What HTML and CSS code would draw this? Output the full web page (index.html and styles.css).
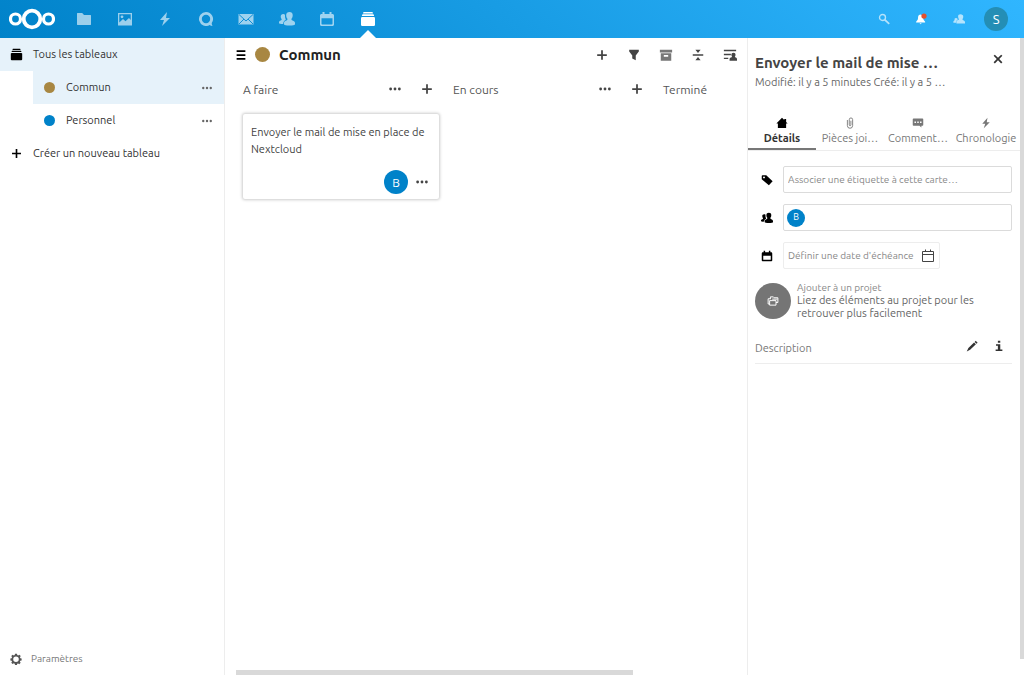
FILE: index.html
```html
<!DOCTYPE html>
<html lang="fr">
<head>
<meta charset="utf-8">
<meta name="viewport" content="width=device-width, initial-scale=1">
<title>Commun - Deck - Nextcloud</title>
<link rel="stylesheet" href="styles.css">
</head>
<body>
<svg class="defs" aria-hidden="true">
  <symbol id="dots" viewBox="0 0 16 16"><circle cx="3" cy="8" r="1.600"/><circle cx="8" cy="8" r="1.600"/><circle cx="13" cy="8" r="1.600"/></symbol>
  <symbol id="plus" viewBox="0 0 16 16"><path d="M7 2.500h2V7h4.500v2H9v4.500H7V9H2.500V7H7z"/></symbol>
  <symbol id="bolt" viewBox="0 0 16 16"><path d="M10 1 3 9h4l-2 6 8-8H9z"/></symbol>
  <symbol id="people" viewBox="0 0 16 16"><path d="M10.500 1C8.500 1 7.200 2.200 7.200 3.900c0 1.800.4 3 1.200 3.800.2.900 0 1.400-1.100 1.800C6 10 5 10.500 5 12v1.600c0 .5 2.300 1 5.500 1s5.500-.5 5.500-1V12c0-1.500-1-2-2.400-2.500-1.100-.4-1.300-.9-1.100-1.800.8-.8 1.200-2 1.200-3.800C13.700 2.200 12.500 1 10.500 1z"/><path d="M4.200 3C2.700 3 1.700 4 1.700 5.400c0 1.200.3 2.100.9 2.700.1.800 0 1.100-.9 1.400C.6 9.900 0 10.300 0 11.300v1c0 .3 1.600.7 4.200.7.100-2.300.8-3.400 2.600-4.100-.3-.3-.1-.8-.1-.9-.5-.6-.8-1.800-.7-4.300-.5-.5-1-.7-1.800-.7z"/></symbol>
  <symbol id="deck" viewBox="0 0 16 16"><path d="M3.500 1h9l.5 1.500H3zM2.500 3.300h11l.7 1.700H1.800z"/><rect x="1" y="6" width="14" height="9" rx="1.200"/></symbol>
  <symbol id="calendar" viewBox="0 0 16 16"><path fill-rule="evenodd" d="M3.500 1h2v2h5V1h2v2h1c.8 0 1.500.7 1.500 1.500v9c0 .8-.7 1.500-1.500 1.500h-11C1.700 15 1 14.300 1 13.500v-9C1 3.700 1.700 3 2.500 3h1zM2.500 7.300v5.400c0 .5.300.8.800.8h9.400c.5 0 .8-.3.800-.8V7.300z"/></symbol>
</svg>

<header class="topbar">
  <a class="logo" href="#" aria-label="Nextcloud">
    <svg viewBox="0 0 46 22" fill="none" stroke="#fff"><circle cx="23" cy="11" r="8.300" stroke-width="3.800"/><circle cx="6.500" cy="11" r="5" stroke-width="3.200"/><circle cx="39.500" cy="11" r="5" stroke-width="3.200"/></svg>
  </a>
  <nav class="apps" aria-label="Applications">
    <a href="#" aria-label="Fichiers"><svg viewBox="0 0 16 16"><path d="M1.500 2h4.700L8 4h6.500c.3 0 .5.200.5.500v9c0 .3-.2.500-.5.500h-13c-.3 0-.5-.2-.5-.5v-11c0-.3.200-.5.500-.5z"/></svg></a>
    <a href="#" aria-label="Photos"><svg viewBox="0 0 16 16"><path fill-rule="evenodd" d="M1 2h14v12.500H1zM2.300 3.300v8.200L6 8l2.500 2.300L12 7l1.700 2V3.300z"/><circle cx="5" cy="5.800" r="1.400"/></svg></a>
    <a href="#" aria-label="Activité"><svg><use href="#bolt"/></svg></a>
    <a href="#" aria-label="Discussion"><svg viewBox="0 0 16 16"><path fill-rule="evenodd" d="M8 1a7 7 0 1 0 3.600 13c.8.600 2 1 2.900 1-.6-.9-.8-2-.8-2.900A7 7 0 0 0 8 1zm0 2.800a4.200 4.200 0 1 1 0 8.400 4.200 4.200 0 0 1 0-8.400z"/></svg></a>
    <a href="#" aria-label="Courriel"><svg viewBox="0 0 16 16"><path d="M.5 3h15v10.500H.5z"/><path class="line" d="m1 3.500 7 6.500 7-6.500M1 13l5-5M15 13l-5-5"/></svg></a>
    <a href="#" aria-label="Contacts"><svg><use href="#people"/></svg></a>
    <a href="#" aria-label="Agenda"><svg><use href="#calendar"/></svg></a>
    <a class="current" href="#" aria-label="Deck"><svg><use href="#deck"/></svg></a>
  </nav>
  <div class="tools">
    <button aria-label="Rechercher"><svg viewBox="0 0 16 16" fill="none" stroke="#fff"><circle cx="6" cy="6" r="4" stroke-width="1.800"/><path d="m9 9 6 5.500" stroke-width="2.300"/></svg></button>
    <button class="bell" aria-label="Notifications"><svg viewBox="0 0 16 16"><path d="M7 2C4.500 2.500 4 4.500 4 7c0 2-1 3-2.500 4.500V12.500h12V11.500C12 10 11 9 11 7c0-2.500-1-4.500-4-5zM6 13.500h3L7.500 15z"/><circle cx="12" cy="4" r="3.500" fill="#e2502d"/></svg></button>
    <button aria-label="Contacts"><svg viewBox="0 0 16 16"><path d="M10 1.500C7.800 1.500 6.800 2.700 6.800 4.500c0 1.500.4 2.600 1 3.400 0 .8-.2 1.200-1 1.500-1.300.5-2.300 1-2.300 2.500V14H16v-2c0-1.500-1.200-2-2.400-2.500-.8-.3-1-.7-.9-1.500.7-.8 1-1.900 1-3.400 0-1.900-1.500-3.100-3.700-3.100zM4 6.500C2.300 6.500 1.700 7.700 2.200 9.300c0 .7-1.700.9-1.700 2.200V13H4c0-2.200.7-3.300 2.200-4C6.400 7.700 5.700 6.500 4 6.500z"/></svg></button>
    <button class="user" aria-label="Compte">S</button>
  </div>
</header>

<div class="layout">
  <nav class="boards" aria-label="Tableaux">
    <a class="entry selected" href="#"><svg><use href="#deck"/></svg><span>Tous les tableaux</span></a>
    <div class="entry sub selected"><i class="dot brown"></i><a href="#">Commun</a><button aria-label="Actions pour Commun"><svg><use href="#dots"/></svg></button></div>
    <div class="entry sub"><i class="dot blue"></i><a href="#">Personnel</a><button aria-label="Actions pour Personnel"><svg><use href="#dots"/></svg></button></div>
    <a class="entry" href="#"><svg><use href="#plus"/></svg><span>Créer un nouveau tableau</span></a>
    <button class="settings"><svg viewBox="0 0 16 16"><path fill-rule="evenodd" d="M6.700 1h2.600l.4 1.800 1.200.5 1.600-1 1.800 1.800-1 1.600.5 1.200 1.700.4v2.600l-1.800.4-.5 1.200 1 1.600-1.800 1.800-1.600-1-1.200.5-.3 1.700H6.700l-.4-1.800-1.200-.5-1.600 1-1.800-1.800 1-1.600-.5-1.200L.5 9.900V7.300l1.700-.4.5-1.200-1-1.600 1.800-1.800 1.600 1 1.200-.5zM8 4.700a3.700 3.700 0 1 0 0 7.400 3.700 3.700 0 0 0 0-7.400z"/></svg>Paramètres</button>
  </nav>

  <main class="board">
    <div class="board-head">
      <button class="menu" aria-label="Menu"><svg viewBox="0 0 16 16"><path d="M3 2.500h10v2H3zM3 7h10v2H3zM3 11.500h10v2H3z"/></svg></button>
      <i class="dot brown big"></i>
      <h1>Commun</h1>
      <div class="actions">
        <button aria-label="Ajouter une liste"><svg><use href="#plus"/></svg></button>
        <button aria-label="Filtrer"><svg viewBox="0 0 16 16"><path d="M2.500 2h11v2L10 8.500V14l-4-2V8.500L2.500 4z"/></svg></button>
        <button class="grey" aria-label="Cartes archivées"><svg viewBox="0 0 16 16"><path fill-rule="evenodd" d="M1 2h14v3H1zM2 6h12v8.500H2zM5.500 8v2h5V8z"/></svg></button>
        <button aria-label="Mode compact"><svg viewBox="0 0 16 16"><path d="M2 7.200h12v1.700H2zM5 2h6L8 5.700zM5 14h6l-3-3.700z"/></svg></button>
        <button aria-label="Détails du tableau"><svg viewBox="0 0 16 16"><path d="M1 2h14v1.700H1zM1 6.500h8v1.700H1zM1 11h5v1.700H1zM12 5.500c1.600 0 2.300 1 2.300 2.300 0 1-.3 1.700-.8 2.300.1.900 2.500.9 2.500 2.500v1.900H7.500v-1.900c0-1.600 2.800-1.600 2.900-2.500-.5-.6-.8-1.300-.8-2.300 0-1.300.8-2.300 2.400-2.300z"/></svg></button>
      </div>
    </div>
    <div class="stacks">
      <section class="stack">
        <header><h2>A faire</h2><button aria-label="Actions"><svg><use href="#dots"/></svg></button><button aria-label="Ajouter une carte"><svg><use href="#plus"/></svg></button></header>
        <article class="card">
          <h3>Envoyer le mail de mise en place de Nextcloud</h3>
          <footer><span class="avatar">B</span><button aria-label="Actions de la carte"><svg><use href="#dots"/></svg></button></footer>
        </article>
      </section>
      <section class="stack">
        <header><h2>En cours</h2><button aria-label="Actions"><svg><use href="#dots"/></svg></button><button aria-label="Ajouter une carte"><svg><use href="#plus"/></svg></button></header>
      </section>
      <section class="stack">
        <header><h2>Terminé</h2></header>
      </section>
    </div>
    <div class="hscroll"></div>
  </main>

  <aside class="details">
    <div class="details-head">
      <div><h2>Envoyer le mail de mise …</h2><p>Modifié: il y a 5 minutes Créé: il y a 5 …</p></div>
      <button aria-label="Fermer"><svg viewBox="0 0 16 16"><path d="m4.400 3 3.600 3.600L11.600 3 13 4.400 9.400 8l3.600 3.600-1.400 1.400L8 9.400 4.400 13 3 11.600 6.600 8 3 4.400z"/></svg></button>
    </div>
    <div class="tabs" role="tablist">
      <button role="tab" aria-selected="true"><svg viewBox="0 0 16 16"><path d="M8 1 .5 8.500h2V14.500h11V8.500h2l-2-2V2.500H11V4z"/></svg>Détails</button>
      <button role="tab" aria-selected="false"><svg viewBox="0 0 16 16" fill="none" stroke="#777" stroke-width="1.200"><path d="M4.500 4v7.500a3.500 3.500 0 0 0 7 0V3.500a2.200 2.200 0 0 0-4.500 0v7a1.100 1.100 0 0 0 2.200 0V5"/></svg>Pièces joi…</button>
      <button role="tab" aria-selected="false"><svg viewBox="0 0 16 16"><path fill-rule="evenodd" d="M2 2h12c.6 0 1 .4 1 1v7.500c0 .6-.4 1-1 1h-1.500V14L10 11.500H2c-.6 0-1-.4-1-1V3c0-.6.400-1 1-1zM3.300 6v2h2V6zM7 6v2h2V6zM10.700 6v2h2V6z"/></svg>Comment…</button>
      <button role="tab" aria-selected="false"><svg><use href="#bolt"/></svg>Chronologie</button>
    </div>
    <div class="fields">
      <label for="tags" aria-label="Étiquettes"><svg viewBox="0 0 16 16"><path fill-rule="evenodd" d="M2 1.500h5L15.500 9.500 10.500 15 1 7v-4.500c0-.6.400-1 1-1zM4 3.200a1.300 1.300 0 1 0 0 2.600 1.300 1.300 0 0 0 0-2.600z"/></svg></label>
      <input id="tags" type="text" placeholder="Associer une étiquette à cette carte…">
      <label for="members" aria-label="Membres"><svg><use href="#people"/></svg></label>
      <div class="box"><span class="avatar small">B</span><input id="members" type="text"></div>
      <label for="due" aria-label="Échéance"><svg viewBox="0 0 16 16"><path fill-rule="evenodd" d="M3.500 1h2v2h5V1h2v2h1c.8 0 1.500.7 1.500 1.500v9c0 .8-.7 1.500-1.500 1.500h-11C1.700 15 1 14.300 1 13.500v-9C1 3.700 1.700 3 2.500 3h1zM3 7.500V13h10V7.500z"/></svg></label>
      <div class="box date"><input id="due" type="text" placeholder="Définir une date d'échéance"><svg viewBox="0 0 14 14" fill="none" stroke="#444"><path d="M1.500 2.500h11v10h-11zM1.500 5.500h11M4.500 .5v2M9.500 .5v2"/></svg></div>
    </div>
    <button class="project">
      <span class="disc"><svg viewBox="0 0 16 16" fill="none" stroke="#fff" stroke-width="1.300"><path d="M4.500 5.500V2.500h4l1 1.200h5V10H12M4.500 5H1.500v7h2M3.500 7.500h8.500v6H3.500zM7 5.500h7"/></svg></span>
      <span><small>Ajouter à un projet</small>Liez des éléments au projet pour les retrouver plus facilement</span>
    </button>
    <div class="description">
      <h3>Description</h3>
      <button aria-label="Modifier"><svg viewBox="0 0 16 16"><path d="M11.500 2.500 13 1l2.500 2.500L14 5zM10.700 3.300 13.200 5.800 5.500 13 1 15.300 3.200 10.500z"/></svg></button>
      <button aria-label="Aide"><svg viewBox="0 0 16 16"><path d="M6.500 1h3.200v2.800H6.500zM4 5.500h5.700v7H12.500v2H3.500v-2h3V7.500H4z"/></svg></button>
    </div>
  </aside>
  <div class="vscroll"></div>
</div>
</body>
</html>
```
FILE: styles.css
```css
* { box-sizing: border-box; }
body {
  margin: 0;
  height: 100vh;
  display: flex;
  flex-direction: column;
  background: #fff;
  color: #333;
  font: 11px/17px Ubuntu, "Noto Sans", sans-serif;
}
h1, h2, h3, p { margin: 0; font-weight: 400; }
a { color: inherit; text-decoration: none; }
button { border: 0; padding: 0; background: none; color: inherit; font: inherit; display: flex; align-items: center; justify-content: center; }
input { border: 0; padding: 0; background: none; font: inherit; color: inherit; min-width: 0; outline: 0; }
svg { width: 12px; height: 12px; fill: currentColor; flex: none; }
svg[fill="none"] { fill: none; }
.defs { position: absolute; width: 0; height: 0; }

.topbar { height: 38px; flex: none; display: flex; align-items: center; background: linear-gradient(40deg, #0082c9 0%, #30b6ff 100%); color: #fff; }
.logo { width: 64px; display: flex; justify-content: center; }
.logo svg { width: 46px; height: 22px; }
.apps { width: 324px; height: 38px; display: grid; grid-template-columns: repeat(8, 1fr); }
.apps a { position: relative; display: flex; align-items: center; justify-content: center; }
.apps svg { width: 16px; height: 16px; opacity: .6; }
.apps .current svg { opacity: 1; }
.apps .current::after { content: ""; position: absolute; bottom: 0; left: 50%; margin-left: -8px; border: 8px solid transparent; border-top: 0; border-bottom-color: #fff; }
.line { fill: none; stroke: #128fd8; stroke-width: 1; }
.tools { width: 150px; margin: 0 9px 0 auto; display: grid; grid-template-columns: repeat(4, 1fr); align-items: center; justify-items: center; }
.tools svg { opacity: .65; }
.tools .bell svg { opacity: 1; }
.user { width: 24px; height: 24px; border-radius: 50%; background: #248eb5; font-size: 13px; }

.layout { flex: 1; min-height: 0; display: flex; }
.boards { width: 225px; flex: none; border-right: 1px solid #ededed; display: flex; flex-direction: column; }
.entry { height: 33px; display: flex; align-items: center; padding-left: 10px; gap: 10px; }
.entry > svg { width: 13px; height: 13px; color: #000; }
.entry.selected { background: #e6f2fa; }
.entry.sub { margin-left: 33px; padding-left: 11px; }
.entry.sub a { flex: 1; }
.entry button { width: 34px; height: 33px; color: #666; }
.dot { width: 11px; height: 11px; border-radius: 50%; flex: none; margin-right: 1px; }
.brown { background: #a88742; }
.blue { background: #0082c9; }
.dot.big { width: 15px; height: 15px; margin: 0; }
.settings { margin-top: auto; height: 33px; justify-content: flex-start; padding-left: 10px; gap: 9px; color: #777; font-size: 10px; }
.settings svg { color: #555; }

.board { flex: 1; min-width: 0; display: flex; flex-direction: column; }
.board-head { height: 33px; display: flex; align-items: center; padding: 0 1px 0 9px; }
.menu { margin-right: 7px; color: #000; }
.menu svg { width: 14px; height: 14px; }
.board-head h1 { margin-left: 9px; font-size: 15px; font-weight: 700; color: #222; }
.actions { display: flex; margin-left: auto; color: #444; }
.actions button { width: 32px; height: 33px; }
.actions svg, .stack header svg { width: 14px; height: 14px; }
.actions .grey { color: #777; }
.stacks { flex: 1; display: flex; gap: 14px; padding: 2px 0 0 18px; overflow: hidden; }
.stack { width: 196px; flex: none; }
.stack header { height: 32px; display: flex; align-items: center; color: #444; }
.stack h2 { flex: 1; font-size: 12px; color: #555; }
.stack header button { width: 33px; height: 32px; }
.stack header button:last-child { width: 32px; margin-right: -4px; }
.card { height: 85px; margin-top: 9px; padding: 10px 8px 5px; border-radius: 2px; box-shadow: 0 0 3px 1px #ccc; display: flex; flex-direction: column; color: #444; }
.card h3 { font-size: 11px; }
.card footer { margin-top: auto; display: flex; align-items: center; justify-content: flex-end; gap: 7px; }
.card footer svg { width: 14px; height: 14px; }
.avatar { width: 24px; height: 24px; border-radius: 50%; background: #0082c9; color: #fff; font-size: 12px; display: flex; align-items: center; justify-content: center; flex: none; }
.avatar.small { width: 18px; height: 18px; font-size: 9px; }
.card button { width: 14px; margin-right: 2px; }
.hscroll { height: 5px; width: 76%; margin-left: 11px; background: #d9d9d9; }

.details { width: 273px; flex: none; border-left: 1px solid #ededed; color: #666; }
.details-head { display: flex; justify-content: space-between; align-items: flex-start; padding: 14px 15px 0 7px; }
.details-head h2 { font-size: 15px; line-height: 22px; font-weight: 700; color: #444; white-space: nowrap; }
.details-head p { line-height: 16px; font-size: 11px; white-space: nowrap; }
.details-head button { color: #333; }
.details-head button svg { width: 14px; height: 14px; }
.tabs { display: grid; grid-template-columns: repeat(4, 1fr); margin-top: 22px; border-bottom: 1px solid #ededed; }
.tabs button { flex-direction: column; height: 38px; justify-content: flex-start; padding-top: 5px; gap: 1px; color: #777; white-space: nowrap; border-bottom: 2px solid transparent; }
.tabs [aria-selected="true"] { font-weight: 700; color: #333; border-color: #777; }
.tabs [aria-selected="true"] svg { color: #000; }
.fields { display: grid; grid-template-columns: 28px 1fr; gap: 11px 0; padding: 15px 8px 0 7px; align-items: center; }
.fields label { display: flex; color: #000; justify-content: center; padding-right: 4px; }
.fields > input, .box { height: 27px; border: 1px solid #dbdbdb; border-radius: 2px; padding: 0 4px; font-size: 10px; }
.box { display: flex; align-items: center; }
.box .avatar { margin-left: -1px; }
.box input { flex: 1; }
.date { width: 157px; border-color: #ededed; }
.date svg { width: 14px; height: 14px; }
::placeholder { color: #888; opacity: 1; }
.project { margin: 12px 7px 0; gap: 6px; text-align: left; line-height: 13px; justify-content: flex-start; color: #666; }
.project small { display: block; font-size: 10px; color: #888; }
.disc { width: 36px; height: 36px; border-radius: 50%; background: #757575; display: flex; align-items: center; justify-content: center; flex: none; }
.description { margin: 13px 8px 0 7px; height: 31px; display: flex; align-items: center; border-bottom: 1px solid #ededed; }
.description h3 { flex: 1; font-size: 11px; color: #777; }
.description button { width: 28px; height: 26px; align-self: flex-start; margin-right: -1px; color: #333; }
.vscroll { width: 4px; margin-bottom: 16px; background: #d9d9d9; }
```
